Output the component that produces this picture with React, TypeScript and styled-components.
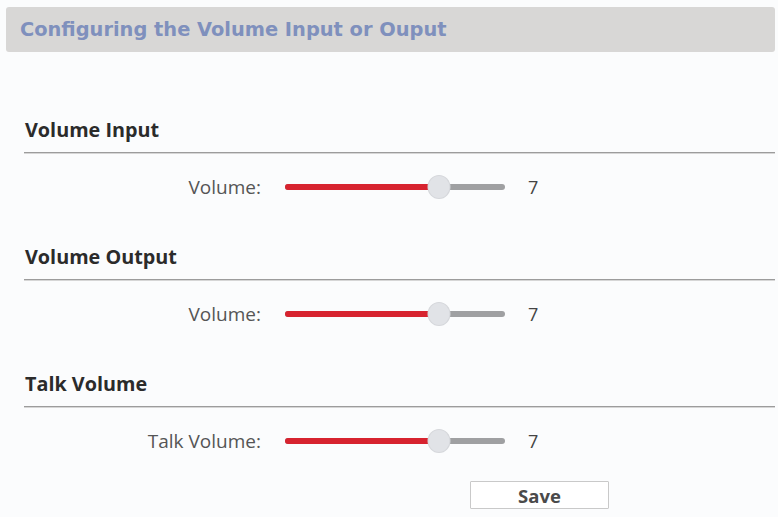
import React from "react";
import styled, { createGlobalStyle } from "styled-components";

const GlobalStyle = createGlobalStyle`
  html, body {
    margin: 0;
    padding: 0;
    background: #fbfcfd;
  }
  body {
    font-family: "Open Sans", "Liberation Sans", Arial, sans-serif;
  }
`;

const Page = styled.div`
  width: 778px;
  height: 517px;
  padding: 7px 3px 0 6px;
  box-sizing: border-box;
  overflow: hidden;
`;

const TitleBar = styled.div`
  height: 45px;
  background: #d8d7d6;
  border-radius: 3px;
  display: flex;
  align-items: center;
  padding-left: 14px;
`;

const Title = styled.h1`
  margin: 0;
  font-family: "DejaVu Sans", Verdana, sans-serif;
  font-size: 19.4px;
  font-weight: 700;
  color: #7f90bd;
  letter-spacing: 0;
`;

const Content = styled.div`
  padding: 65px 0 0 18px;
  display: flex;
  flex-direction: column;
`;

const Section = styled.section`
  display: flex;
  flex-direction: column;
  & + & {
    margin-top: 41px;
  }
`;

const Heading = styled.h2`
  margin: 0 0 9px 1px;
  height: 26px;
  line-height: 26px;
  font-size: 19.8px;
  font-weight: 700;
  color: #2b2b2b;
`;

const Divider = styled.div`
  height: 1px;
  background: #9c9c9c;
  border-bottom: 1px solid #d6d6d6;
  margin-bottom: 17px;
`;

const Row = styled.div`
  display: grid;
  grid-template-columns: 237px 222px auto;
  column-gap: 22px;
  align-items: center;
  height: 32px;
`;

const Label = styled.span`
  text-align: right;
  font-size: 19px;
  color: #555;
`;

const Track = styled.div`
  position: relative;
  height: 6px;
  border-radius: 3px;
  background: #9fa0a2;
  margin-left: 2px;
`;

const Fill = styled.div`
  position: absolute;
  left: 0;
  top: 0;
  bottom: 0;
  border-radius: 3px 0 0 3px;
  background: #d7232f;
`;

const Thumb = styled.div`
  position: absolute;
  top: 50%;
  width: 21px;
  height: 22px;
  border-radius: 50%;
  background: #e1e3e7;
  box-shadow: 0 0 0 1px #d5d7db;
  transform: translate(-50%, -50%);
`;

const Value = styled.span`
  font-size: 18px;
  color: #444;
  margin-left: 1px;
`;

const Actions = styled.div`
  display: flex;
  padding-left: 446px;
  margin-top: 24px;
`;

const SaveButton = styled.button`
  width: 139px;
  height: 28px;
  background: #ffffff;
  border: 1px solid #c9c9c9;
  border-radius: 1px;
  font-family: "Open Sans", "Liberation Sans", Arial, sans-serif;
  font-size: 18.5px;
  font-weight: 700;
  color: #4a4a4a;
  padding: 0;
  cursor: pointer;
`;

type SliderProps = { value: number; max: number };

const Slider: React.FC<SliderProps> = ({ value, max }) => {
  const pct = (value / max) * 100;
  return (
    <Track>
      <Fill style={{ width: `${pct}%` }} />
      <Thumb style={{ left: `${pct}%` }} />
    </Track>
  );
};

const sections = [
  { title: "Volume Input", label: "Volume:", value: 7 },
  { title: "Volume Output", label: "Volume:", value: 7 },
  { title: "Talk Volume", label: "Talk Volume:", value: 7 },
];

export default function App() {
  return (
    <>
      <GlobalStyle />
      <Page>
        <TitleBar>
          <Title>Configuring the Volume Input or Ouput</Title>
        </TitleBar>
        <Content>
          {sections.map((s) => (
            <Section key={s.title}>
              <Heading>{s.title}</Heading>
              <Divider />
              <Row>
                <Label>{s.label}</Label>
                <Slider value={s.value} max={10} />
                <Value>{s.value}</Value>
              </Row>
            </Section>
          ))}
          <Actions>
            <SaveButton>Save</SaveButton>
          </Actions>
        </Content>
      </Page>
    </>
  );
}
